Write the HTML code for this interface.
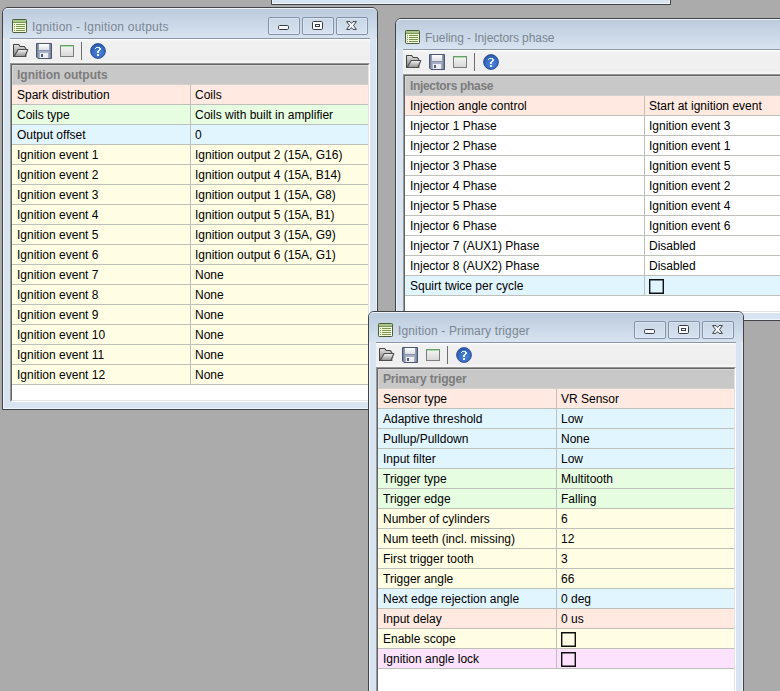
<!DOCTYPE html>
<html><head><meta charset="utf-8"><style>
*{box-sizing:border-box}
html,body{margin:0;padding:0;width:780px;height:691px;overflow:hidden;background:#ababab;font-family:"Liberation Sans",sans-serif;font-size:12px}
.win{position:absolute;border:1px solid #404448;border-radius:6px 6px 0 0;background:#d8e4f0;overflow:hidden}
.tbar{position:absolute;left:0;top:0;height:30px;background:linear-gradient(#bccbdc,#d7e3f0);border-top:1px solid #eef2f7;border-radius:5px 5px 0 0}
.win::before{content:"";position:absolute;left:0;top:0;right:0;bottom:0;border-left:1px solid rgba(255,255,255,.6);border-right:1px solid rgba(255,255,255,.5);border-bottom:1px solid rgba(255,255,255,.6);pointer-events:none;border-radius:5px 5px 0 0}
.ttext{position:absolute;left:29px;top:12px;color:#7c8692;line-height:14px;white-space:nowrap}
.btn{position:absolute;width:32px;height:18px;border:1px solid #8292a8;border-radius:2px;background:linear-gradient(#c9d7e6,#d6e2ef);box-shadow:inset 0 0 0 1px rgba(255,255,255,.3)}
.cline{position:absolute;left:7px;top:30px;height:1px;background:#8e98a2}
.tool{position:absolute;left:7px;top:31px;height:24px;background:linear-gradient(#f4f5f7 0,#f0f0f0 3px,#f0f0f0 17px,#ededed 19px,#f0f0f0 20px,#f6f6f6 23px);border-top:1px solid #fff}
.ic{position:absolute;line-height:0}
.sep{position:absolute;left:71px;top:2px;width:1px;height:18px;background:#6e6e6e}
.tbl{position:absolute;left:7px;top:55px;background:#fff;border-top:1px solid #979797;border-left:1px solid #979797;border-right:1px solid #fff;border-bottom:1px solid #fff}
.tin{position:absolute;left:0;top:0;right:0;bottom:0;border-top:1px solid #656565;border-left:1px solid #656565;border-right:1px solid #e3e3e3;border-bottom:1px solid #e3e3e3;overflow:hidden}
.hdr{height:20px;background:#c8c8c8;box-shadow:inset 1px 1px 0 #d6d6d6,inset 0 -1px 0 #d0d0d0;color:#7c7c7c;font-weight:bold;padding-left:5px;line-height:20px;white-space:nowrap}
.row{height:20px;border-bottom:1px solid #c0c0ba;display:flex;white-space:nowrap;color:#000000}
.lc{height:19px;line-height:21px;padding-left:5px;border-right:1px solid #c0c0ba;flex:none}
.rc{height:19px;line-height:21px;padding-left:4px;position:relative}
.chk{position:absolute;left:4px;top:3px;width:15px;height:15px;box-shadow:inset 0 0 0 1.4px #111}
</style></head><body>
<div class="win" style="left:271px;top:-400px;width:400px;height:405px;z-index:0"></div>
<div class="win" style="left:2px;top:7px;width:376px;height:403px;z-index:1">
<div class="tbar" style="width:374px"></div>
<div style="position:absolute;left:9px;top:11px"><svg width="15" height="14" viewBox="0 0 15 14">
<rect x="0.5" y="0.5" width="14" height="13" rx="0.8" fill="#f3f9d9" stroke="#4b5d3a"/>
<rect x="1" y="1" width="13" height="2" fill="#a9c58a"/>
<rect x="1" y="3" width="13" height="1" fill="#7b9656"/>
<g fill="#7a9552"><rect x="2" y="5" width="1" height="1"/><rect x="2" y="7" width="1" height="1"/><rect x="2" y="9" width="1" height="1"/><rect x="2" y="11" width="1" height="1"/>
<rect x="4" y="5" width="9" height="1"/><rect x="4" y="7" width="9" height="1"/><rect x="4" y="9" width="9" height="1"/><rect x="4" y="11" width="9" height="1"/></g>
</svg></div>
<div class="ttext" style="letter-spacing:0.22px">Ignition - Ignition outputs</div>
<div class="btn" style="left:265px;top:9px"><div style="position:absolute;left:9px;top:7px;line-height:0"><svg width="11" height="5" viewBox="0 0 11 5"><rect x="0.5" y="0.5" width="10" height="4" rx="1.2" fill="#fafbfc" stroke="#3a3e44"/></svg></div></div>
<div class="btn" style="left:299px;top:9px"><div style="position:absolute;left:9px;top:3px;line-height:0"><svg width="11" height="9" viewBox="0 0 11 9"><rect x="0.5" y="0.5" width="10" height="8" rx="1.2" fill="#fafbfc" stroke="#3a3e44"/><rect x="3.5" y="3.5" width="4" height="2" fill="#fafbfc" stroke="#3a3e44"/></svg></div></div>
<div class="btn" style="left:333px;top:9px"><div style="position:absolute;left:9px;top:3px;line-height:0"><svg width="11" height="9" viewBox="0 0 11 9"><path d="M0.6 0.6 H4 L5.5 2.4 L7 0.6 H10.4 L7.5 4.5 L10.4 8.4 H7 L5.5 6.6 L4 8.4 H0.6 L3.5 4.5 Z" fill="#fafbfc" stroke="#3a3e44" stroke-linejoin="round"/></svg></div></div>
<div class="cline" style="width:360px"></div>
<div class="tool" style="width:360px"><div class="ic" style="left:3px;top:4px"><svg width="16" height="13" viewBox="0 0 16 13">
<defs><linearGradient id="fg1" x1="0" y1="0" x2="0" y2="1"><stop offset="0" stop-color="#e4e4e4"/><stop offset="1" stop-color="#7c7c7c"/></linearGradient>
<linearGradient id="fg2" x1="0" y1="0" x2="0" y2="1"><stop offset="0" stop-color="#f6f6f6"/><stop offset="1" stop-color="#8e8e8e"/></linearGradient></defs>
<path d="M0.5 12.5 V1.2 Q0.5 0.5 1.2 0.5 H5.6 L7.2 2.5 H11.2 L12.8 4.5 V12.5 Z" fill="url(#fg1)" stroke="#464646" stroke-width="1.1"/>
<path d="M5.2 5.5 H14.8 L12 12.5 H1.2 Z" fill="url(#fg2)" stroke="#4e4e4e" stroke-width="1.1" stroke-linejoin="round"/>
</svg></div><div class="ic" style="left:26px;top:3px"><svg width="16" height="16" viewBox="0 0 16 16">
<defs><linearGradient id="fl1" x1="0" y1="0" x2="1" y2="0"><stop offset="0" stop-color="#66728e"/><stop offset="0.2" stop-color="#a6afc4"/><stop offset="0.8" stop-color="#a6afc4"/><stop offset="1" stop-color="#66728e"/></linearGradient>
<linearGradient id="fl2" x1="0" y1="0" x2="0" y2="1"><stop offset="0" stop-color="#ffffff"/><stop offset="1" stop-color="#dcdfe6"/></linearGradient></defs>
<path d="M0.5 0.5 H15.5 V15.5 H2 L0.5 14 Z" fill="url(#fl1)" stroke="#4e5770"/>
<rect x="3" y="1" width="10" height="6" fill="url(#fl2)"/>
<rect x="3" y="7" width="10" height="1" fill="#8890a6"/>
<rect x="4" y="10" width="8" height="5" fill="#eceef2"/>
<rect x="5" y="11" width="2" height="3" fill="#545c72"/>
</svg></div><div class="ic" style="left:50px;top:5px"><svg width="14" height="12" viewBox="0 0 14 12">
<defs><linearGradient id="wi1" x1="0" y1="0" x2="0" y2="1"><stop offset="0" stop-color="#f6f6f6"/><stop offset="1" stop-color="#d6d6d6"/></linearGradient></defs>
<rect x="0.5" y="0.5" width="13" height="11" fill="url(#wi1)" stroke="#7c7c7c"/>
<rect x="0" y="0" width="14" height="1" fill="#6f9a6f"/>
<rect x="1" y="1" width="12" height="1" fill="#a2e2a2"/>
</svg></div><div class="sep"></div><div class="ic" style="left:80px;top:3px"><svg width="16" height="16" viewBox="0 0 16 16">
<defs><radialGradient id="hg" cx="0.55" cy="0.62" r="0.62"><stop offset="0" stop-color="#4f86dc"/><stop offset="0.7" stop-color="#3669c2"/><stop offset="1" stop-color="#2a55a2"/></radialGradient></defs>
<circle cx="8" cy="8" r="7.4" fill="url(#hg)" stroke="#27498c" stroke-width="0.9"/>
<g fill="#e2f4ff"><rect x="6" y="4" width="4" height="1"/><rect x="5" y="5" width="1" height="1"/><rect x="9" y="5" width="2" height="2"/><rect x="8" y="7" width="2" height="1"/><rect x="7" y="8" width="2" height="2"/><rect x="7" y="11" width="2" height="2"/></g>
</svg></div></div>
<div class="tbl" style="width:360px;height:339px"><div class="tin">
<div class="hdr" style="letter-spacing:0px">Ignition outputs</div>
<div class="row" style="background:#ffe9e1"><div class="lc" style="width:179px">Spark distribution</div><div class="rc">Coils</div></div>
<div class="row" style="background:#e7fde2"><div class="lc" style="width:179px">Coils type</div><div class="rc">Coils with built in amplifier</div></div>
<div class="row" style="background:#e1f5ff"><div class="lc" style="width:179px">Output offset</div><div class="rc">0</div></div>
<div class="row" style="background:#fffee4"><div class="lc" style="width:179px">Ignition event 1</div><div class="rc">Ignition output 2 (15A, G16)</div></div>
<div class="row" style="background:#fffee4"><div class="lc" style="width:179px">Ignition event 2</div><div class="rc">Ignition output 4 (15A, B14)</div></div>
<div class="row" style="background:#fffee4"><div class="lc" style="width:179px">Ignition event 3</div><div class="rc">Ignition output 1 (15A, G8)</div></div>
<div class="row" style="background:#fffee4"><div class="lc" style="width:179px">Ignition event 4</div><div class="rc">Ignition output 5 (15A, B1)</div></div>
<div class="row" style="background:#fffee4"><div class="lc" style="width:179px">Ignition event 5</div><div class="rc">Ignition output 3 (15A, G9)</div></div>
<div class="row" style="background:#fffee4"><div class="lc" style="width:179px">Ignition event 6</div><div class="rc">Ignition output 6 (15A, G1)</div></div>
<div class="row" style="background:#fffee4"><div class="lc" style="width:179px">Ignition event 7</div><div class="rc">None</div></div>
<div class="row" style="background:#fffee4"><div class="lc" style="width:179px">Ignition event 8</div><div class="rc">None</div></div>
<div class="row" style="background:#fffee4"><div class="lc" style="width:179px">Ignition event 9</div><div class="rc">None</div></div>
<div class="row" style="background:#fffee4"><div class="lc" style="width:179px">Ignition event 10</div><div class="rc">None</div></div>
<div class="row" style="background:#fffee4"><div class="lc" style="width:179px">Ignition event 11</div><div class="rc">None</div></div>
<div class="row" style="background:#fffee4"><div class="lc" style="width:179px">Ignition event 12</div><div class="rc">None</div></div>
</div></div>
</div>
<div class="win" style="left:395px;top:18px;width:520px;height:303px;z-index:2">
<div class="tbar" style="width:518px"></div>
<div style="position:absolute;left:9px;top:11px"><svg width="15" height="14" viewBox="0 0 15 14">
<rect x="0.5" y="0.5" width="14" height="13" rx="0.8" fill="#f3f9d9" stroke="#4b5d3a"/>
<rect x="1" y="1" width="13" height="2" fill="#a9c58a"/>
<rect x="1" y="3" width="13" height="1" fill="#7b9656"/>
<g fill="#7a9552"><rect x="2" y="5" width="1" height="1"/><rect x="2" y="7" width="1" height="1"/><rect x="2" y="9" width="1" height="1"/><rect x="2" y="11" width="1" height="1"/>
<rect x="4" y="5" width="9" height="1"/><rect x="4" y="7" width="9" height="1"/><rect x="4" y="9" width="9" height="1"/><rect x="4" y="11" width="9" height="1"/></g>
</svg></div>
<div class="ttext" style="letter-spacing:-0.08px">Fueling - Injectors phase</div>
<div class="btn" style="left:409px;top:9px"><div style="position:absolute;left:9px;top:7px;line-height:0"><svg width="11" height="5" viewBox="0 0 11 5"><rect x="0.5" y="0.5" width="10" height="4" rx="1.2" fill="#fafbfc" stroke="#3a3e44"/></svg></div></div>
<div class="btn" style="left:443px;top:9px"><div style="position:absolute;left:9px;top:3px;line-height:0"><svg width="11" height="9" viewBox="0 0 11 9"><rect x="0.5" y="0.5" width="10" height="8" rx="1.2" fill="#fafbfc" stroke="#3a3e44"/><rect x="3.5" y="3.5" width="4" height="2" fill="#fafbfc" stroke="#3a3e44"/></svg></div></div>
<div class="btn" style="left:477px;top:9px"><div style="position:absolute;left:9px;top:3px;line-height:0"><svg width="11" height="9" viewBox="0 0 11 9"><path d="M0.6 0.6 H4 L5.5 2.4 L7 0.6 H10.4 L7.5 4.5 L10.4 8.4 H7 L5.5 6.6 L4 8.4 H0.6 L3.5 4.5 Z" fill="#fafbfc" stroke="#3a3e44" stroke-linejoin="round"/></svg></div></div>
<div class="cline" style="width:504px"></div>
<div class="tool" style="width:504px"><div class="ic" style="left:3px;top:4px"><svg width="16" height="13" viewBox="0 0 16 13">
<defs><linearGradient id="fg1" x1="0" y1="0" x2="0" y2="1"><stop offset="0" stop-color="#e4e4e4"/><stop offset="1" stop-color="#7c7c7c"/></linearGradient>
<linearGradient id="fg2" x1="0" y1="0" x2="0" y2="1"><stop offset="0" stop-color="#f6f6f6"/><stop offset="1" stop-color="#8e8e8e"/></linearGradient></defs>
<path d="M0.5 12.5 V1.2 Q0.5 0.5 1.2 0.5 H5.6 L7.2 2.5 H11.2 L12.8 4.5 V12.5 Z" fill="url(#fg1)" stroke="#464646" stroke-width="1.1"/>
<path d="M5.2 5.5 H14.8 L12 12.5 H1.2 Z" fill="url(#fg2)" stroke="#4e4e4e" stroke-width="1.1" stroke-linejoin="round"/>
</svg></div><div class="ic" style="left:26px;top:3px"><svg width="16" height="16" viewBox="0 0 16 16">
<defs><linearGradient id="fl1" x1="0" y1="0" x2="1" y2="0"><stop offset="0" stop-color="#66728e"/><stop offset="0.2" stop-color="#a6afc4"/><stop offset="0.8" stop-color="#a6afc4"/><stop offset="1" stop-color="#66728e"/></linearGradient>
<linearGradient id="fl2" x1="0" y1="0" x2="0" y2="1"><stop offset="0" stop-color="#ffffff"/><stop offset="1" stop-color="#dcdfe6"/></linearGradient></defs>
<path d="M0.5 0.5 H15.5 V15.5 H2 L0.5 14 Z" fill="url(#fl1)" stroke="#4e5770"/>
<rect x="3" y="1" width="10" height="6" fill="url(#fl2)"/>
<rect x="3" y="7" width="10" height="1" fill="#8890a6"/>
<rect x="4" y="10" width="8" height="5" fill="#eceef2"/>
<rect x="5" y="11" width="2" height="3" fill="#545c72"/>
</svg></div><div class="ic" style="left:50px;top:5px"><svg width="14" height="12" viewBox="0 0 14 12">
<defs><linearGradient id="wi1" x1="0" y1="0" x2="0" y2="1"><stop offset="0" stop-color="#f6f6f6"/><stop offset="1" stop-color="#d6d6d6"/></linearGradient></defs>
<rect x="0.5" y="0.5" width="13" height="11" fill="url(#wi1)" stroke="#7c7c7c"/>
<rect x="0" y="0" width="14" height="1" fill="#6f9a6f"/>
<rect x="1" y="1" width="12" height="1" fill="#a2e2a2"/>
</svg></div><div class="sep"></div><div class="ic" style="left:80px;top:3px"><svg width="16" height="16" viewBox="0 0 16 16">
<defs><radialGradient id="hg" cx="0.55" cy="0.62" r="0.62"><stop offset="0" stop-color="#4f86dc"/><stop offset="0.7" stop-color="#3669c2"/><stop offset="1" stop-color="#2a55a2"/></radialGradient></defs>
<circle cx="8" cy="8" r="7.4" fill="url(#hg)" stroke="#27498c" stroke-width="0.9"/>
<g fill="#e2f4ff"><rect x="6" y="4" width="4" height="1"/><rect x="5" y="5" width="1" height="1"/><rect x="9" y="5" width="2" height="2"/><rect x="8" y="7" width="2" height="1"/><rect x="7" y="8" width="2" height="2"/><rect x="7" y="11" width="2" height="2"/></g>
</svg></div></div>
<div class="tbl" style="width:504px;height:239px"><div class="tin">
<div class="hdr" style="letter-spacing:-0.33px">Injectors phase</div>
<div class="row" style="background:#ffe9e1"><div class="lc" style="width:240px">Injection angle control</div><div class="rc">Start at ignition event</div></div>
<div class="row" style="background:#ffffff"><div class="lc" style="width:240px">Injector 1 Phase</div><div class="rc">Ignition event 3</div></div>
<div class="row" style="background:#ffffff"><div class="lc" style="width:240px">Injector 2 Phase</div><div class="rc">Ignition event 1</div></div>
<div class="row" style="background:#ffffff"><div class="lc" style="width:240px">Injector 3 Phase</div><div class="rc">Ignition event 5</div></div>
<div class="row" style="background:#ffffff"><div class="lc" style="width:240px">Injector 4 Phase</div><div class="rc">Ignition event 2</div></div>
<div class="row" style="background:#ffffff"><div class="lc" style="width:240px">Injector 5 Phase</div><div class="rc">Ignition event 4</div></div>
<div class="row" style="background:#ffffff"><div class="lc" style="width:240px">Injector 6 Phase</div><div class="rc">Ignition event 6</div></div>
<div class="row" style="background:#ffffff"><div class="lc" style="width:240px">Injector 7 (AUX1) Phase</div><div class="rc">Disabled</div></div>
<div class="row" style="background:#ffffff"><div class="lc" style="width:240px">Injector 8 (AUX2) Phase</div><div class="rc">Disabled</div></div>
<div class="row" style="background:#e1f5ff"><div class="lc" style="width:240px">Squirt twice per cycle</div><div class="rc"><span class="chk"></span></div></div>
</div></div>
</div>
<div class="win" style="left:368px;top:311px;width:376px;height:420px;z-index:3">
<div class="tbar" style="width:374px"></div>
<div style="position:absolute;left:9px;top:11px"><svg width="15" height="14" viewBox="0 0 15 14">
<rect x="0.5" y="0.5" width="14" height="13" rx="0.8" fill="#f3f9d9" stroke="#4b5d3a"/>
<rect x="1" y="1" width="13" height="2" fill="#a9c58a"/>
<rect x="1" y="3" width="13" height="1" fill="#7b9656"/>
<g fill="#7a9552"><rect x="2" y="5" width="1" height="1"/><rect x="2" y="7" width="1" height="1"/><rect x="2" y="9" width="1" height="1"/><rect x="2" y="11" width="1" height="1"/>
<rect x="4" y="5" width="9" height="1"/><rect x="4" y="7" width="9" height="1"/><rect x="4" y="9" width="9" height="1"/><rect x="4" y="11" width="9" height="1"/></g>
</svg></div>
<div class="ttext" style="letter-spacing:0.14px">Ignition - Primary trigger</div>
<div class="btn" style="left:265px;top:9px"><div style="position:absolute;left:9px;top:7px;line-height:0"><svg width="11" height="5" viewBox="0 0 11 5"><rect x="0.5" y="0.5" width="10" height="4" rx="1.2" fill="#fafbfc" stroke="#3a3e44"/></svg></div></div>
<div class="btn" style="left:299px;top:9px"><div style="position:absolute;left:9px;top:3px;line-height:0"><svg width="11" height="9" viewBox="0 0 11 9"><rect x="0.5" y="0.5" width="10" height="8" rx="1.2" fill="#fafbfc" stroke="#3a3e44"/><rect x="3.5" y="3.5" width="4" height="2" fill="#fafbfc" stroke="#3a3e44"/></svg></div></div>
<div class="btn" style="left:333px;top:9px"><div style="position:absolute;left:9px;top:3px;line-height:0"><svg width="11" height="9" viewBox="0 0 11 9"><path d="M0.6 0.6 H4 L5.5 2.4 L7 0.6 H10.4 L7.5 4.5 L10.4 8.4 H7 L5.5 6.6 L4 8.4 H0.6 L3.5 4.5 Z" fill="#fafbfc" stroke="#3a3e44" stroke-linejoin="round"/></svg></div></div>
<div class="cline" style="width:360px"></div>
<div class="tool" style="width:360px"><div class="ic" style="left:3px;top:4px"><svg width="16" height="13" viewBox="0 0 16 13">
<defs><linearGradient id="fg1" x1="0" y1="0" x2="0" y2="1"><stop offset="0" stop-color="#e4e4e4"/><stop offset="1" stop-color="#7c7c7c"/></linearGradient>
<linearGradient id="fg2" x1="0" y1="0" x2="0" y2="1"><stop offset="0" stop-color="#f6f6f6"/><stop offset="1" stop-color="#8e8e8e"/></linearGradient></defs>
<path d="M0.5 12.5 V1.2 Q0.5 0.5 1.2 0.5 H5.6 L7.2 2.5 H11.2 L12.8 4.5 V12.5 Z" fill="url(#fg1)" stroke="#464646" stroke-width="1.1"/>
<path d="M5.2 5.5 H14.8 L12 12.5 H1.2 Z" fill="url(#fg2)" stroke="#4e4e4e" stroke-width="1.1" stroke-linejoin="round"/>
</svg></div><div class="ic" style="left:26px;top:3px"><svg width="16" height="16" viewBox="0 0 16 16">
<defs><linearGradient id="fl1" x1="0" y1="0" x2="1" y2="0"><stop offset="0" stop-color="#66728e"/><stop offset="0.2" stop-color="#a6afc4"/><stop offset="0.8" stop-color="#a6afc4"/><stop offset="1" stop-color="#66728e"/></linearGradient>
<linearGradient id="fl2" x1="0" y1="0" x2="0" y2="1"><stop offset="0" stop-color="#ffffff"/><stop offset="1" stop-color="#dcdfe6"/></linearGradient></defs>
<path d="M0.5 0.5 H15.5 V15.5 H2 L0.5 14 Z" fill="url(#fl1)" stroke="#4e5770"/>
<rect x="3" y="1" width="10" height="6" fill="url(#fl2)"/>
<rect x="3" y="7" width="10" height="1" fill="#8890a6"/>
<rect x="4" y="10" width="8" height="5" fill="#eceef2"/>
<rect x="5" y="11" width="2" height="3" fill="#545c72"/>
</svg></div><div class="ic" style="left:50px;top:5px"><svg width="14" height="12" viewBox="0 0 14 12">
<defs><linearGradient id="wi1" x1="0" y1="0" x2="0" y2="1"><stop offset="0" stop-color="#f6f6f6"/><stop offset="1" stop-color="#d6d6d6"/></linearGradient></defs>
<rect x="0.5" y="0.5" width="13" height="11" fill="url(#wi1)" stroke="#7c7c7c"/>
<rect x="0" y="0" width="14" height="1" fill="#6f9a6f"/>
<rect x="1" y="1" width="12" height="1" fill="#a2e2a2"/>
</svg></div><div class="sep"></div><div class="ic" style="left:80px;top:3px"><svg width="16" height="16" viewBox="0 0 16 16">
<defs><radialGradient id="hg" cx="0.55" cy="0.62" r="0.62"><stop offset="0" stop-color="#4f86dc"/><stop offset="0.7" stop-color="#3669c2"/><stop offset="1" stop-color="#2a55a2"/></radialGradient></defs>
<circle cx="8" cy="8" r="7.4" fill="url(#hg)" stroke="#27498c" stroke-width="0.9"/>
<g fill="#e2f4ff"><rect x="6" y="4" width="4" height="1"/><rect x="5" y="5" width="1" height="1"/><rect x="9" y="5" width="2" height="2"/><rect x="8" y="7" width="2" height="1"/><rect x="7" y="8" width="2" height="2"/><rect x="7" y="11" width="2" height="2"/></g>
</svg></div></div>
<div class="tbl" style="width:360px;height:356px"><div class="tin">
<div class="hdr" style="letter-spacing:-0.17px">Primary trigger</div>
<div class="row" style="background:#ffe9e1"><div class="lc" style="width:179px">Sensor type</div><div class="rc">VR Sensor</div></div>
<div class="row" style="background:#e1f5ff"><div class="lc" style="width:179px">Adaptive threshold</div><div class="rc">Low</div></div>
<div class="row" style="background:#e1f5ff"><div class="lc" style="width:179px">Pullup/Pulldown</div><div class="rc">None</div></div>
<div class="row" style="background:#e1f5ff"><div class="lc" style="width:179px">Input filter</div><div class="rc">Low</div></div>
<div class="row" style="background:#e7fde2"><div class="lc" style="width:179px">Trigger type</div><div class="rc">Multitooth</div></div>
<div class="row" style="background:#e7fde2"><div class="lc" style="width:179px">Trigger edge</div><div class="rc">Falling</div></div>
<div class="row" style="background:#fffee4"><div class="lc" style="width:179px">Number of cylinders</div><div class="rc">6</div></div>
<div class="row" style="background:#fffee4"><div class="lc" style="width:179px">Num teeth (incl. missing)</div><div class="rc">12</div></div>
<div class="row" style="background:#fffee4"><div class="lc" style="width:179px">First trigger tooth</div><div class="rc">3</div></div>
<div class="row" style="background:#fffee4"><div class="lc" style="width:179px">Trigger angle</div><div class="rc">66</div></div>
<div class="row" style="background:#e1f5ff"><div class="lc" style="width:179px">Next edge rejection angle</div><div class="rc">0 deg</div></div>
<div class="row" style="background:#ffe9e1"><div class="lc" style="width:179px">Input delay</div><div class="rc">0 us</div></div>
<div class="row" style="background:#fffee4"><div class="lc" style="width:179px">Enable scope</div><div class="rc"><span class="chk"></span></div></div>
<div class="row" style="background:#fce2fd"><div class="lc" style="width:179px">Ignition angle lock</div><div class="rc"><span class="chk"></span></div></div>
</div></div>
</div>
</body></html>
